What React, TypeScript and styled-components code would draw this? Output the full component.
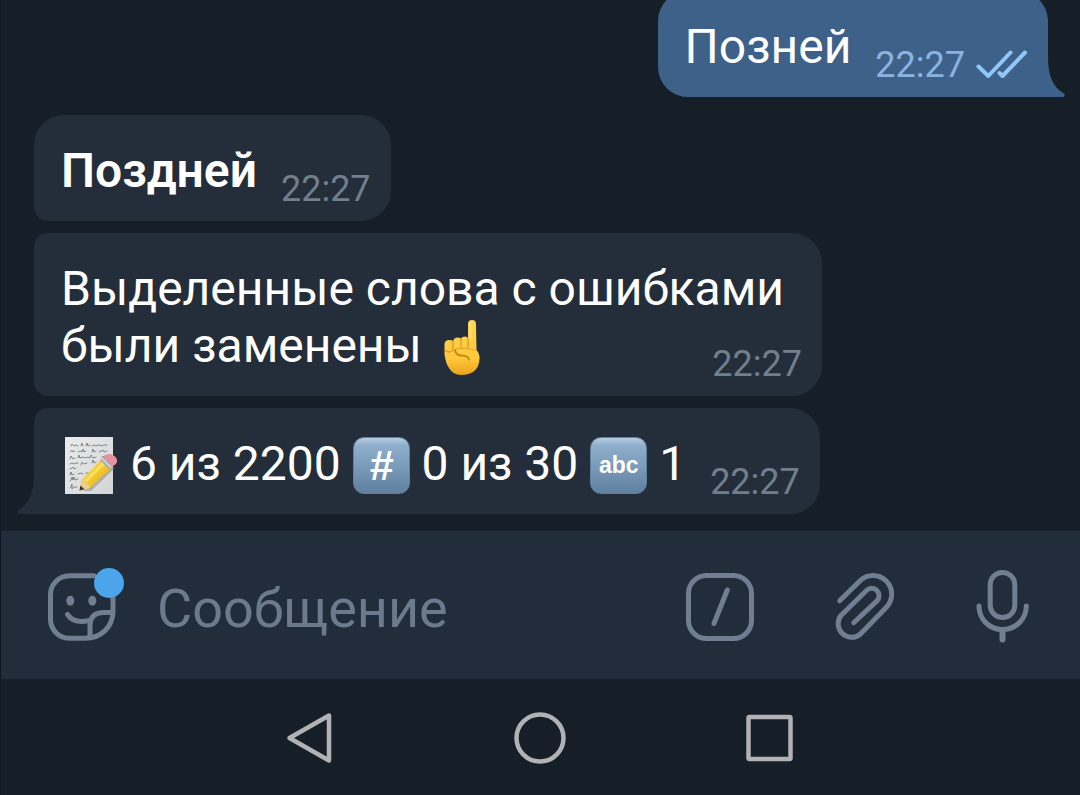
import React from "react";
import styled, { createGlobalStyle, css } from "styled-components";

const GlobalStyle = createGlobalStyle`
  * { box-sizing: border-box; }
  html, body { height: 100%; margin: 0; }
  body {
    background: #161e27;
    color: #fff;
    font-family: Roboto, "Noto Sans", sans-serif;
    overflow: hidden;
  }
  #root { height: 100%; }
`;

const Screen = styled.div`
  display: flex;
  flex-direction: column;
  height: 100%;
  border-left: 1px solid #10171e;
`;

const Chat = styled.main`
  flex: 1;
  min-height: 0;
  overflow: hidden;
  display: flex;
  flex-direction: column;
  justify-content: flex-end;
  align-items: flex-start;
  gap: 12px;
  padding: 0 32px 17px 33px;
`;

type Position = "single" | "first" | "middle" | "last";

const radii: Record<Position, string> = {
  single: "30px 30px 0 30px",
  first: "30px 30px 30px 14px",
  middle: "14px 30px 30px 14px",
  last: "14px 30px 30px 0",
};

const Bubble = styled.article<{ $position: Position; $outgoing?: boolean }>`
  position: relative;
  display: flow-root;
  flex-shrink: 0;
  max-width: 788px;
  padding: 27px 20px 22px 27px;
  border-radius: ${(p) => radii[p.$position]};
  background: #232e3a;
  font-size: 48px;
  line-height: 57px;
  ${(p) =>
    p.$outgoing &&
    css`
      align-self: flex-end;
      margin-bottom: 6px;
      background: #3e6189;
    `}
`;

const Strong = styled.strong`
  font-weight: 600;
`;

const Stamp = styled.span<{ $outgoing?: boolean }>`
  float: right;
  display: flex;
  align-items: center;
  gap: 11px;
  margin: 29px 0 -8px 24px;
  font-size: 36px;
  line-height: 36px;
  color: ${(p) => (p.$outgoing ? "#8ab4df" : "#717e8c")};
`;

const Tail = styled.svg<{ $side: "left" | "right" }>`
  position: absolute;
  bottom: 0;
  width: 18px;
  height: 40px;
  ${(p) =>
    p.$side === "left"
      ? css`left: -17px; color: #232e3a;`
      : css`right: -17px; color: #3e6189; transform: scaleX(-1);`}
`;

const EmojiSvg = styled.svg`
  width: 57px;
  height: 57px;
  margin-bottom: -2px;
  vertical-align: -12px;
`;

const Tile = styled.span<{ $small?: boolean }>`
  display: inline-flex;
  align-items: center;
  justify-content: center;
  width: 57px;
  height: 57px;
  margin-bottom: -2px;
  vertical-align: bottom;
  border-radius: 11px;
  border: 1px solid #5f819f;
  background: linear-gradient(#b7cde2 0, #8eaecb 14%, #7f9fbe 45%, #607f9e 100%);
  font-family: "Liberation Sans", sans-serif;
  font-size: ${(p) => (p.$small ? 23 : 43)}px;
  font-weight: 700;
  font-style: ${(p) => (p.$small ? "normal" : "italic")};
`;

const Composer = styled.form`
  display: flex;
  align-items: center;
  height: 148px;
  padding: 4px 50px 0 47px;
  background: #212d3b;
  color: #6f7e90;
`;

const IconButton = styled.button`
  display: block;
  flex-shrink: 0;
  padding: 0;
  border: 0;
  background: none;
  color: inherit;
  svg { display: block; }
`;

const MessageInput = styled.input`
  flex: 1;
  min-width: 0;
  margin: 0 24px 0 33px;
  padding: 4px 0 0;
  border: 0;
  outline: 0;
  background: none;
  color: #fff;
  font: 54px/64px Roboto, "Noto Sans", sans-serif;
  &::placeholder { color: #6b7b8e; opacity: 1; }
`;

const Actions = styled.div`
  display: flex;
  align-items: center;
  gap: 81px;
`;

const NavBar = styled.nav`
  display: flex;
  align-items: center;
  justify-content: center;
  gap: 170px;
  height: 116px;
  padding: 2px 2px 0 0;
  color: #b0b2b5;
`;

const BubbleTail = ({ side }: { side: "left" | "right" }) => (
  <Tail $side={side} viewBox="0 0 18 40" aria-hidden="true">
    <path d="M18 0H17C17 17 13 30 1 36.500Q-.5 38 1.500 40H18Z" fill="currentColor" />
  </Tail>
);

const ReadMark = () => (
  <svg width="52" height="30" viewBox="0 0 52 30" fill="none" stroke="#90c7fb" strokeWidth="4" strokeLinecap="round" strokeLinejoin="round" role="img" aria-label="Прочитано">
    <path d="M2.500 16.500 12.300 26 34.500 2.500M23.500 23 26.500 26 49 2.500" />
  </svg>
);

const MemoEmoji = () => (
  <EmojiSvg viewBox="0 0 57 57" role="img" aria-label="Заметка">
    <defs>
      <linearGradient id="sheet" x1="0" y1="0" x2="1" y2="1">
        <stop offset="0" stopColor="#ececeb" />
        <stop offset="1" stopColor="#d2d4d7" />
      </linearGradient>
      <linearGradient id="pencil" x1="0" y1="0" x2="1" y2="1">
        <stop offset="0" stopColor="#ffe56a" />
        <stop offset=".5" stopColor="#f6c92d" />
        <stop offset="1" stopColor="#cf9417" />
      </linearGradient>
    </defs>
    <path d="M4 0H52V57H4Z" fill="url(#sheet)" />
    <g fill="none" stroke="#77797c" strokeWidth=".9" strokeLinecap="round" strokeLinejoin="round">
      <path d="M10 9l1-2 2 2 2-1 2 1M20 9l1-3 1 3M25 9l1-3 1 3 2-1M31 9l2-1 2 1 2-1 2 0 2 1 2-1 3 0" />
      <path d="M9 15l2-2 1 2 2-1M17 15l2-1 2 1 1-3 1 3 2-1M31 15l1-3 1 3 2-1M38 15l2-1 2-1 1 2 3-1" />
      <path d="M9 22l1-3 2 3 2-1M17 21l1-3 1 3 3-1 2 1 3-1 2 1 1-3 2 3 3-1M41 20l3-1" />
      <path d="M9 27l2-1 2 1 2-1 2 0M20 28l1-3 2 2 3-1M31 26l1-3 1 3 2-1" />
      <path d="M9 32l2-1 1-1 1 2 2-1M9 38l1-3 1 3 2-1M17 37l3-1 2 1M25 36l3 0" />
      <path d="M9 44l1-1 1-3 1 3 1-3 1 3 3-1M9 51l1-1 1-3 0 5 2-2 3 0" />
    </g>
    <path d="M22 54 52 29 54 31 30 54Z" fill="#77797c" opacity=".45" />
    <path d="M18.500 53.500 20.500 43 41.500 21 51 30.500 29 51Z" fill="url(#pencil)" />
    <path d="M18.500 53.500 20.500 43Q24 43 24.500 46 28.500 47 29 51Z" fill="#efcf91" />
    <path d="M18.500 53.500 19.500 48.500 23.500 52.300Z" fill="#3b3834" />
    <path d="M25 44 44 25" stroke="#fff09a" strokeWidth="2.500" opacity=".6" />
    <path d="M39 23.500 43 19.500 52 28 48.500 32.500Z" fill="#a9acb0" />
    <path d="M41 21.500 50 30.500" stroke="#dcdee0" strokeWidth="1.200" />
    <path d="M42.500 20Q46 15.500 51 17.500 56.500 20 56 24.500 55.500 27.500 51.500 29Z" fill="#e8919a" />
  </EmojiSvg>
);

const PointUpEmoji = () => (
  <EmojiSvg viewBox="0 0 57 57" role="img" aria-label="Указательный палец вверх">
    <defs>
      <linearGradient id="skin" x1="0" y1="0" x2="0" y2="1">
        <stop offset="0" stopColor="#ffd557" />
        <stop offset=".7" stopColor="#fdc839" />
        <stop offset="1" stopColor="#eda31c" />
      </linearGradient>
    </defs>
    <path
      d="M34 5Q34 1 38 1 42 1 42 5L42.500 31Q46 35 45.500 40 45 49 39 53 34 56 27 56 19 56 15 49 11.500 44 10.500 35V25Q11 21 15 21 18 21 19 22 20 18.500 23.500 18.500 26 18.500 27 19.500 28 17.500 31 17.500 33 17.500 34 19Z"
      fill="url(#skin)"
    />
    <g fill="none" stroke="#c98716" strokeWidth="1.300" strokeLinecap="round" strokeLinejoin="round">
      <path d="M19 22V29Q18.500 33 15 33 12 33 11 31" opacity=".7" />
      <path d="M27 20V28" opacity=".7" />
      <path d="M34 20V28.500" opacity=".7" />
      <path d="M20 31Q24 29 28 29.500 36 29 41 31" opacity=".5" />
      <path d="M21 31.500Q22 36 27 36.500 34 36.500 35 40.500" strokeWidth="2" />
    </g>
    <path d="M36.500 5V20" stroke="#ffe887" strokeWidth="2" strokeLinecap="round" opacity=".6" />
  </EmojiSvg>
);

const lineArt = {
  fill: "none",
  stroke: "currentColor",
  strokeWidth: 5,
  strokeLinecap: "round",
  strokeLinejoin: "round",
} as const;

const StickerIcon = () => (
  <svg width="76" height="78" viewBox="0 5 76 78" {...lineArt}>
    <path d="M46 12.700H21A19 19 0 0 0 2.500 31.700V56A19 19 0 0 0 21 75.300H37C53 75.300 65 64 65 48V28" />
    <path d="M42 74V63Q42 49.500 56 49.500H64" />
    <path d="M19.500 51.500Q26 61 41 57.500" />
    <ellipse cx="22.300" cy="37.700" rx="4" ry="5" fill="currentColor" stroke="none" />
    <ellipse cx="44.300" cy="37.700" rx="4" ry="5" fill="currentColor" stroke="none" />
    <circle cx="61" cy="20" r="15" fill="#4ca4ea" stroke="none" />
  </svg>
);

const CommandIcon = () => (
  <svg width="68" height="68" viewBox="0 0 68 68" {...lineArt}>
    <rect x="2.500" y="2.500" width="63" height="63" rx="18" />
    <path d="M41.300 17 28 50.500" />
  </svg>
);

const ClipIcon = () => (
  <svg width="60" height="68" viewBox="0 0 60 68" {...lineArt}>
    <path d="M4.700 27.700 24.800 8A18.700 18.700 0 0 1 51.200 34.500L25.200 61.200A13.500 13.500 0 0 1 6.200 42.200L31.500 17.500A7.300 7.300 0 0 1 41.900 27.900L18.700 49.700" />
  </svg>
);

const MicIcon = () => (
  <svg width="54" height="76" viewBox="0 0 54 76" {...lineArt}>
    <rect x="14.200" y="3.500" width="24.600" height="45" rx="12.300" />
    <path d="M3 37C3 50 13 60.500 26.500 60.500S50.300 50 50.300 37" />
    <path d="M26.500 61V70.500" strokeWidth="6" />
  </svg>
);

const NavIcon = ({ children }: { children: React.ReactNode }) => (
  <svg width="60" height="60" viewBox="0 0 60 60" {...lineArt} strokeWidth={4.5}>
    {children}
  </svg>
);

export default function App() {
  return (
    <Screen>
      <GlobalStyle />
      <Chat>
        <Bubble $position="single" $outgoing>
          Позней
          <Stamp $outgoing>
            <time>22:27</time>
            <ReadMark />
          </Stamp>
          <BubbleTail side="right" />
        </Bubble>
        <Bubble $position="first">
          <Strong>Поздней</Strong>
          <Stamp><time>22:27</time></Stamp>
        </Bubble>
        <Bubble $position="middle">
          <span>Выделенные слова с ошибками</span> <span>были заменены</span> <PointUpEmoji />
          <Stamp><time>22:27</time></Stamp>
        </Bubble>
        <Bubble $position="last">
          <MemoEmoji /> 6 из 2200 <Tile>#</Tile> 0 из 30 <Tile $small>abc</Tile> 1
          <Stamp><time>22:27</time></Stamp>
          <BubbleTail side="left" />
        </Bubble>
      </Chat>
      <Composer onSubmit={(e) => e.preventDefault()}>
        <IconButton type="button" aria-label="Стикеры"><StickerIcon /></IconButton>
        <MessageInput type="text" placeholder="Сообщение" aria-label="Сообщение" />
        <Actions>
          <IconButton type="button" aria-label="Команды"><CommandIcon /></IconButton>
          <IconButton type="button" aria-label="Прикрепить"><ClipIcon /></IconButton>
          <IconButton type="button" aria-label="Голосовое сообщение"><MicIcon /></IconButton>
        </Actions>
      </Composer>
      <NavBar aria-label="Системная навигация">
        <IconButton type="button" aria-label="Назад"><NavIcon><path d="M9.500 30 49 7.500V52.500Z" /></NavIcon></IconButton>
        <IconButton type="button" aria-label="Домой"><NavIcon><circle cx="30" cy="30" r="23.500" /></NavIcon></IconButton>
        <IconButton type="button" aria-label="Недавние"><NavIcon><rect x="8.500" y="9" width="42" height="42" rx="1" /></NavIcon></IconButton>
      </NavBar>
    </Screen>
  );
}
